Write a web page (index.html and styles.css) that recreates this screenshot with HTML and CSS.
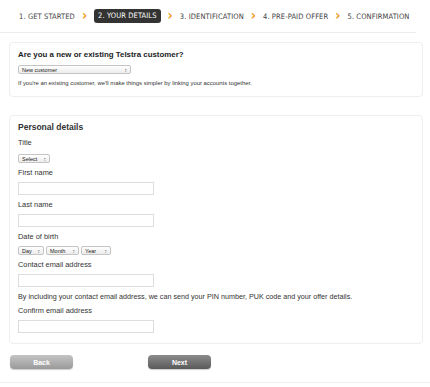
FILE: index.html
```html
<!DOCTYPE html>
<html>
<head>
<meta charset="utf-8">
<link rel="stylesheet" href="styles.css">
</head>
<body>
<div class="steps">
  <span class="step">1. GET STARTED</span>
  <span class="chev">&#x203A;</span>
  <span class="step active">2. YOUR DETAILS</span>
  <span class="chev">&#x203A;</span>
  <span class="step">3. IDENTIFICATION</span>
  <span class="chev">&#x203A;</span>
  <span class="step">4. PRE-PAID OFFER</span>
  <span class="chev">&#x203A;</span>
  <span class="step">5. CONFIRMATION</span>
</div>
<div class="panel panel-one">
  <h2 class="q">Are you a new or existing Telstra customer?</h2>
  <div class="sel sel-wide"><span>New customer</span><span class="arr">&#x2195;</span></div>
  <p class="note">If you're an existing customer, we'll make things simpler by linking your accounts together.</p>
</div>
<div class="panel panel-two">
  <h3 class="sub">Personal details</h3>
  <div class="lbl">Title</div>
  <div class="sel sel-title"><span>Select</span><span class="arr">&#x2195;</span></div>
  <div class="lbl">First name</div>
  <div class="inp"></div>
  <div class="lbl">Last name</div>
  <div class="inp"></div>
  <div class="lbl">Date of birth</div>
  <div class="dob">
    <div class="sel sel-day"><span>Day</span><span class="arr">&#x2195;</span></div>
    <div class="sel sel-month"><span>Month</span><span class="arr">&#x2195;</span></div>
    <div class="sel sel-year"><span>Year</span><span class="arr">&#x2195;</span></div>
  </div>
  <div class="lbl">Contact email address</div>
  <div class="inp"></div>
  <p class="info">By including your contact email address, we can send your PIN number, PUK code and your offer details.</p>
  <div class="lbl">Confirm email address</div>
  <div class="inp"></div>
</div>
<div class="actions">
  <span class="btn back">Back</span>
  <span class="btn next">Next</span>
</div>
<div class="foot"></div>
</body>
</html>
```
FILE: styles.css
```css
html, body {
  margin: 0;
  padding: 0;
  background: #fff;
  font-family: "Liberation Sans", Arial, sans-serif;
  color: #333;
}
.steps {
  height: 32px;
  display: flex;
  align-items: center;
  padding-left: 19px;
  border-bottom: 1px solid #ececec;
  margin-right: 14px;
  font-family: "DejaVu Sans Condensed", "DejaVu Sans", sans-serif;
  font-size: 7.5px;
  color: #444;
  white-space: nowrap;
}
.step {
  letter-spacing: 0.1px;
}
.step.active {
  background: #333;
  color: #fff;
  border-radius: 3px;
  padding: 2px 4px;
  line-height: 10px;
}
.chev {
  color: #f39a1e;
  font-weight: bold;
  font-size: 14px;
  margin: 0 7px;
  line-height: 10px;
  position: relative;
  top: -1px;
}
.panel {
  margin-left: 9px;
  width: 414px;
  border: 1px solid #eee;
  border-radius: 4px;
  box-sizing: border-box;
  padding-left: 8px;
}
.panel-one {
  margin-top: 9px;
  height: 55px;
  padding-top: 6px;
}
.q {
  margin: 0;
  font-size: 7.9px;
  font-weight: bold;
  line-height: 11px;
  color: #222;
}
.sel {
  display: flex;
  justify-content: space-between;
  align-items: center;
  box-sizing: border-box;
  border: 1px solid #c4c4c4;
  border-radius: 2px;
  background: linear-gradient(#fff, #ececec);
  height: 9px;
  padding: 0 3px;
  font-size: 5.5px;
  color: #222;
}
.arr {
  font-size: 5px;
  color: #555;
}
.sel-wide {
  width: 113px;
  margin-top: 5px;
}
.note {
  margin: 6px 0 0;
  font-size: 5.9px;
  color: #333;
}
.panel-two {
  margin-top: 18px;
  height: 229px;
  padding-top: 6px;
}
.sub {
  margin: 0;
  font-size: 8.5px;
  font-weight: bold;
  line-height: 11px;
  color: #333;
}
.lbl {
  font-size: 7.4px;
  line-height: 9px;
  color: #333;
  margin-top: 5px;
}
.sel-title {
  width: 32px;
  margin-top: 7px;
}
.inp {
  width: 136px;
  height: 13px;
  box-sizing: border-box;
  border: 1px solid #ddd;
  margin-top: 5px;
  background: #fff;
}
.dob {
  display: flex;
  gap: 2px;
  margin-top: 5px;
}
.sel-day { width: 26px; }
.sel-month { width: 33px; }
.sel-year { width: 30px; }
.info {
  margin: 5px 0 0;
  font-size: 7.2px;
  line-height: 9px;
  color: #333;
}
.actions {
  display: flex;
  gap: 75px;
  margin: 11px 0 0 10px;
}
.btn {
  width: 63px;
  height: 14px;
  border-radius: 4px;
  color: #fff;
  font-size: 7px;
  font-weight: bold;
  display: flex;
  align-items: center;
  justify-content: center;
  box-shadow: 0 1px 1px rgba(0,0,0,0.2);
}
.back {
  background: linear-gradient(#c4c4c4, #9a9a9a);
}
.next {
  background: linear-gradient(#8c8c8c, #5a5a5a);
}
.foot {
  margin-top: 13px;
  border-top: 1px solid #eee;
}
```
